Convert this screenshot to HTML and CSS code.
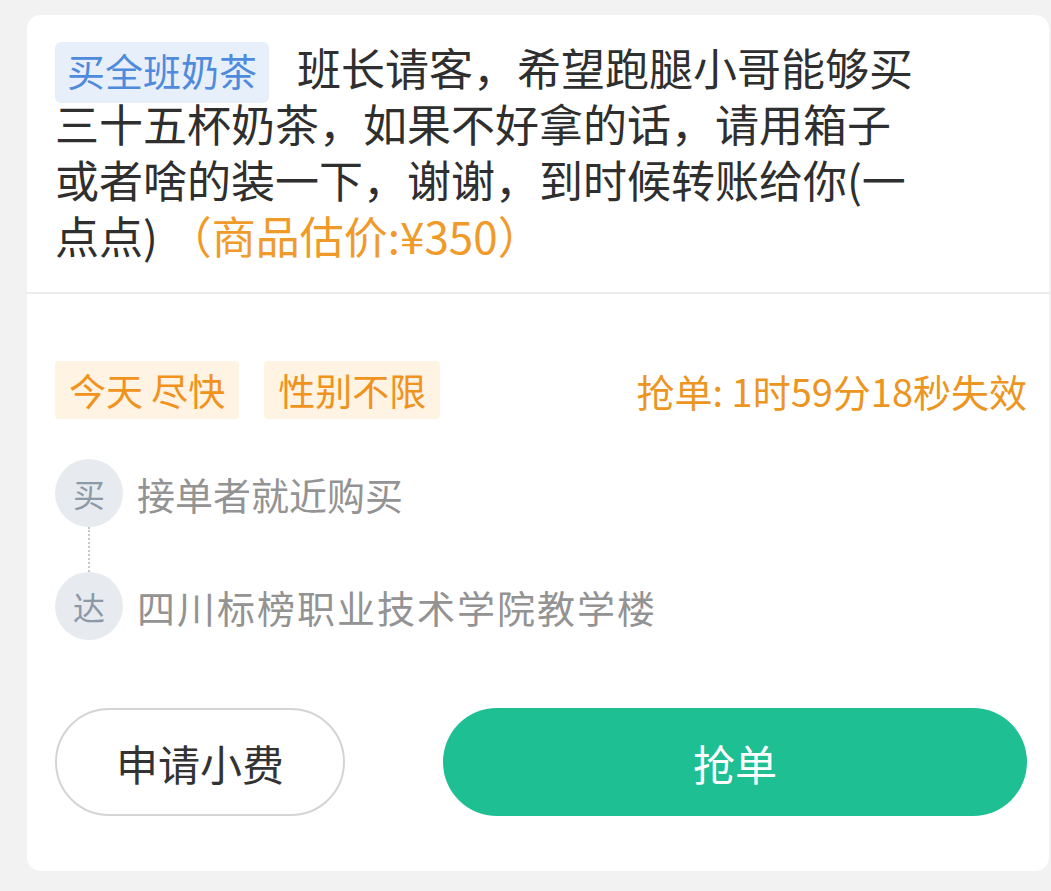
FILE: index.html
```html
<!DOCTYPE html>
<html lang="zh-CN">
<head>
    <meta charset="UTF-8">
    <meta name="viewport" content="width=device-width, initial-scale=1.0">
    <title>跑腿订单</title>
    <link rel="stylesheet" href="styles.css">
</head>
<body>
    <div class="card">
        <div class="desc">
            <p><span class="cat">买全班奶茶</span>班长请客，希望跑腿小哥能够买三十五杯奶茶，如果不好拿的话，请用箱子或者啥的装一下，谢谢，到时候转账给你(一点点) <span class="price">（商品估价:¥350）</span></p>
        </div>

        <div class="info">
            <div class="meta">
                <div class="tags">
                    <span class="tag">今天 尽快</span>
                    <span class="tag">性别不限</span>
                </div>
                <span class="timer">抢单: 1时59分18秒失效</span>
            </div>

            <div class="route">
                <div class="stop">
                    <span class="dot">买</span>
                    <span class="place">接单者就近购买</span>
                </div>
                <div class="link"></div>
                <div class="stop">
                    <span class="dot">达</span>
                    <span class="place addr">四川标榜职业技术学院教学楼</span>
                </div>
            </div>

            <div class="actions">
                <button class="btn-tip">申请小费</button>
                <button class="btn-grab">抢单</button>
            </div>
        </div>
    </div>
</body>
</html>
```

FILE: styles.css
```css
*, *::before, *::after{
    box-sizing: border-box;
    margin: 0;
    padding: 0;
}

body{
    background: #f2f2f2;
    font-family: "Noto Sans CJK SC", "Noto Sans", sans-serif;
    color: #333;
}

.card{
    margin: 15px 2px 20px 27px;
    background: #fff;
    border-radius: 14px;
}

.desc{
    padding: 24px 22px 29px 28px;
    border-bottom: 2px solid #ececec;

    p{
        max-width: 870px;
        font-size: 44px;
        line-height: 56px;
        color: #2f2f2f;
    }
}

.cat{
    padding: 0 12px 6px;
    margin-right: 28px;
    font-size: 38px;
    line-height: 1;
    color: #4f8bdc;
    background: #e7effb;
    border-radius: 6px;
}

.price{
    color: #f09a2a;
}

.info{
    padding: 67px 22px 55px 28px;
}

.meta{
    display: flex;
    justify-content: space-between;
    align-items: center;
}

.tags{
    display: flex;
    gap: 25px;
}

.tag{
    padding: 0 14px;
    font-size: 37px;
    line-height: 58px;
    color: #f0921c;
    background: #fff3e3;
    border-radius: 4px;
}

.timer{
    font-size: 38px;
    color: #ec951f;
}

.route{
    margin-top: 40px;
}

.stop{
    display: flex;
    align-items: center;
    gap: 14px;
}

.dot{
    display: grid;
    place-content: center;
    width: 68px;
    height: 68px;
    border-radius: 50%;
    background: #e7ebf0;
    color: #8d99a6;
    font-size: 32px;
}

.place{
    font-size: 38px;
    color: #939393;
}

.addr{
    letter-spacing: 2px;
}

.link{
    height: 45px;
    margin-left: 33px;
    border-left: 2px dotted #c8c8c8;
}

.actions{
    display: flex;
    gap: 98px;
    margin-top: 68px;

    button{
        height: 108px;
        border-radius: 54px;
        font-family: inherit;
        font-size: 42px;
    }
}

.btn-tip{
    width: 290px;
    background: #fff;
    border: 2px solid #d4d4d4;
    color: #333;
}

.btn-grab{
    flex: 1;
    background: #1dbf93;
    border: none;
    color: #fff;
}
```
